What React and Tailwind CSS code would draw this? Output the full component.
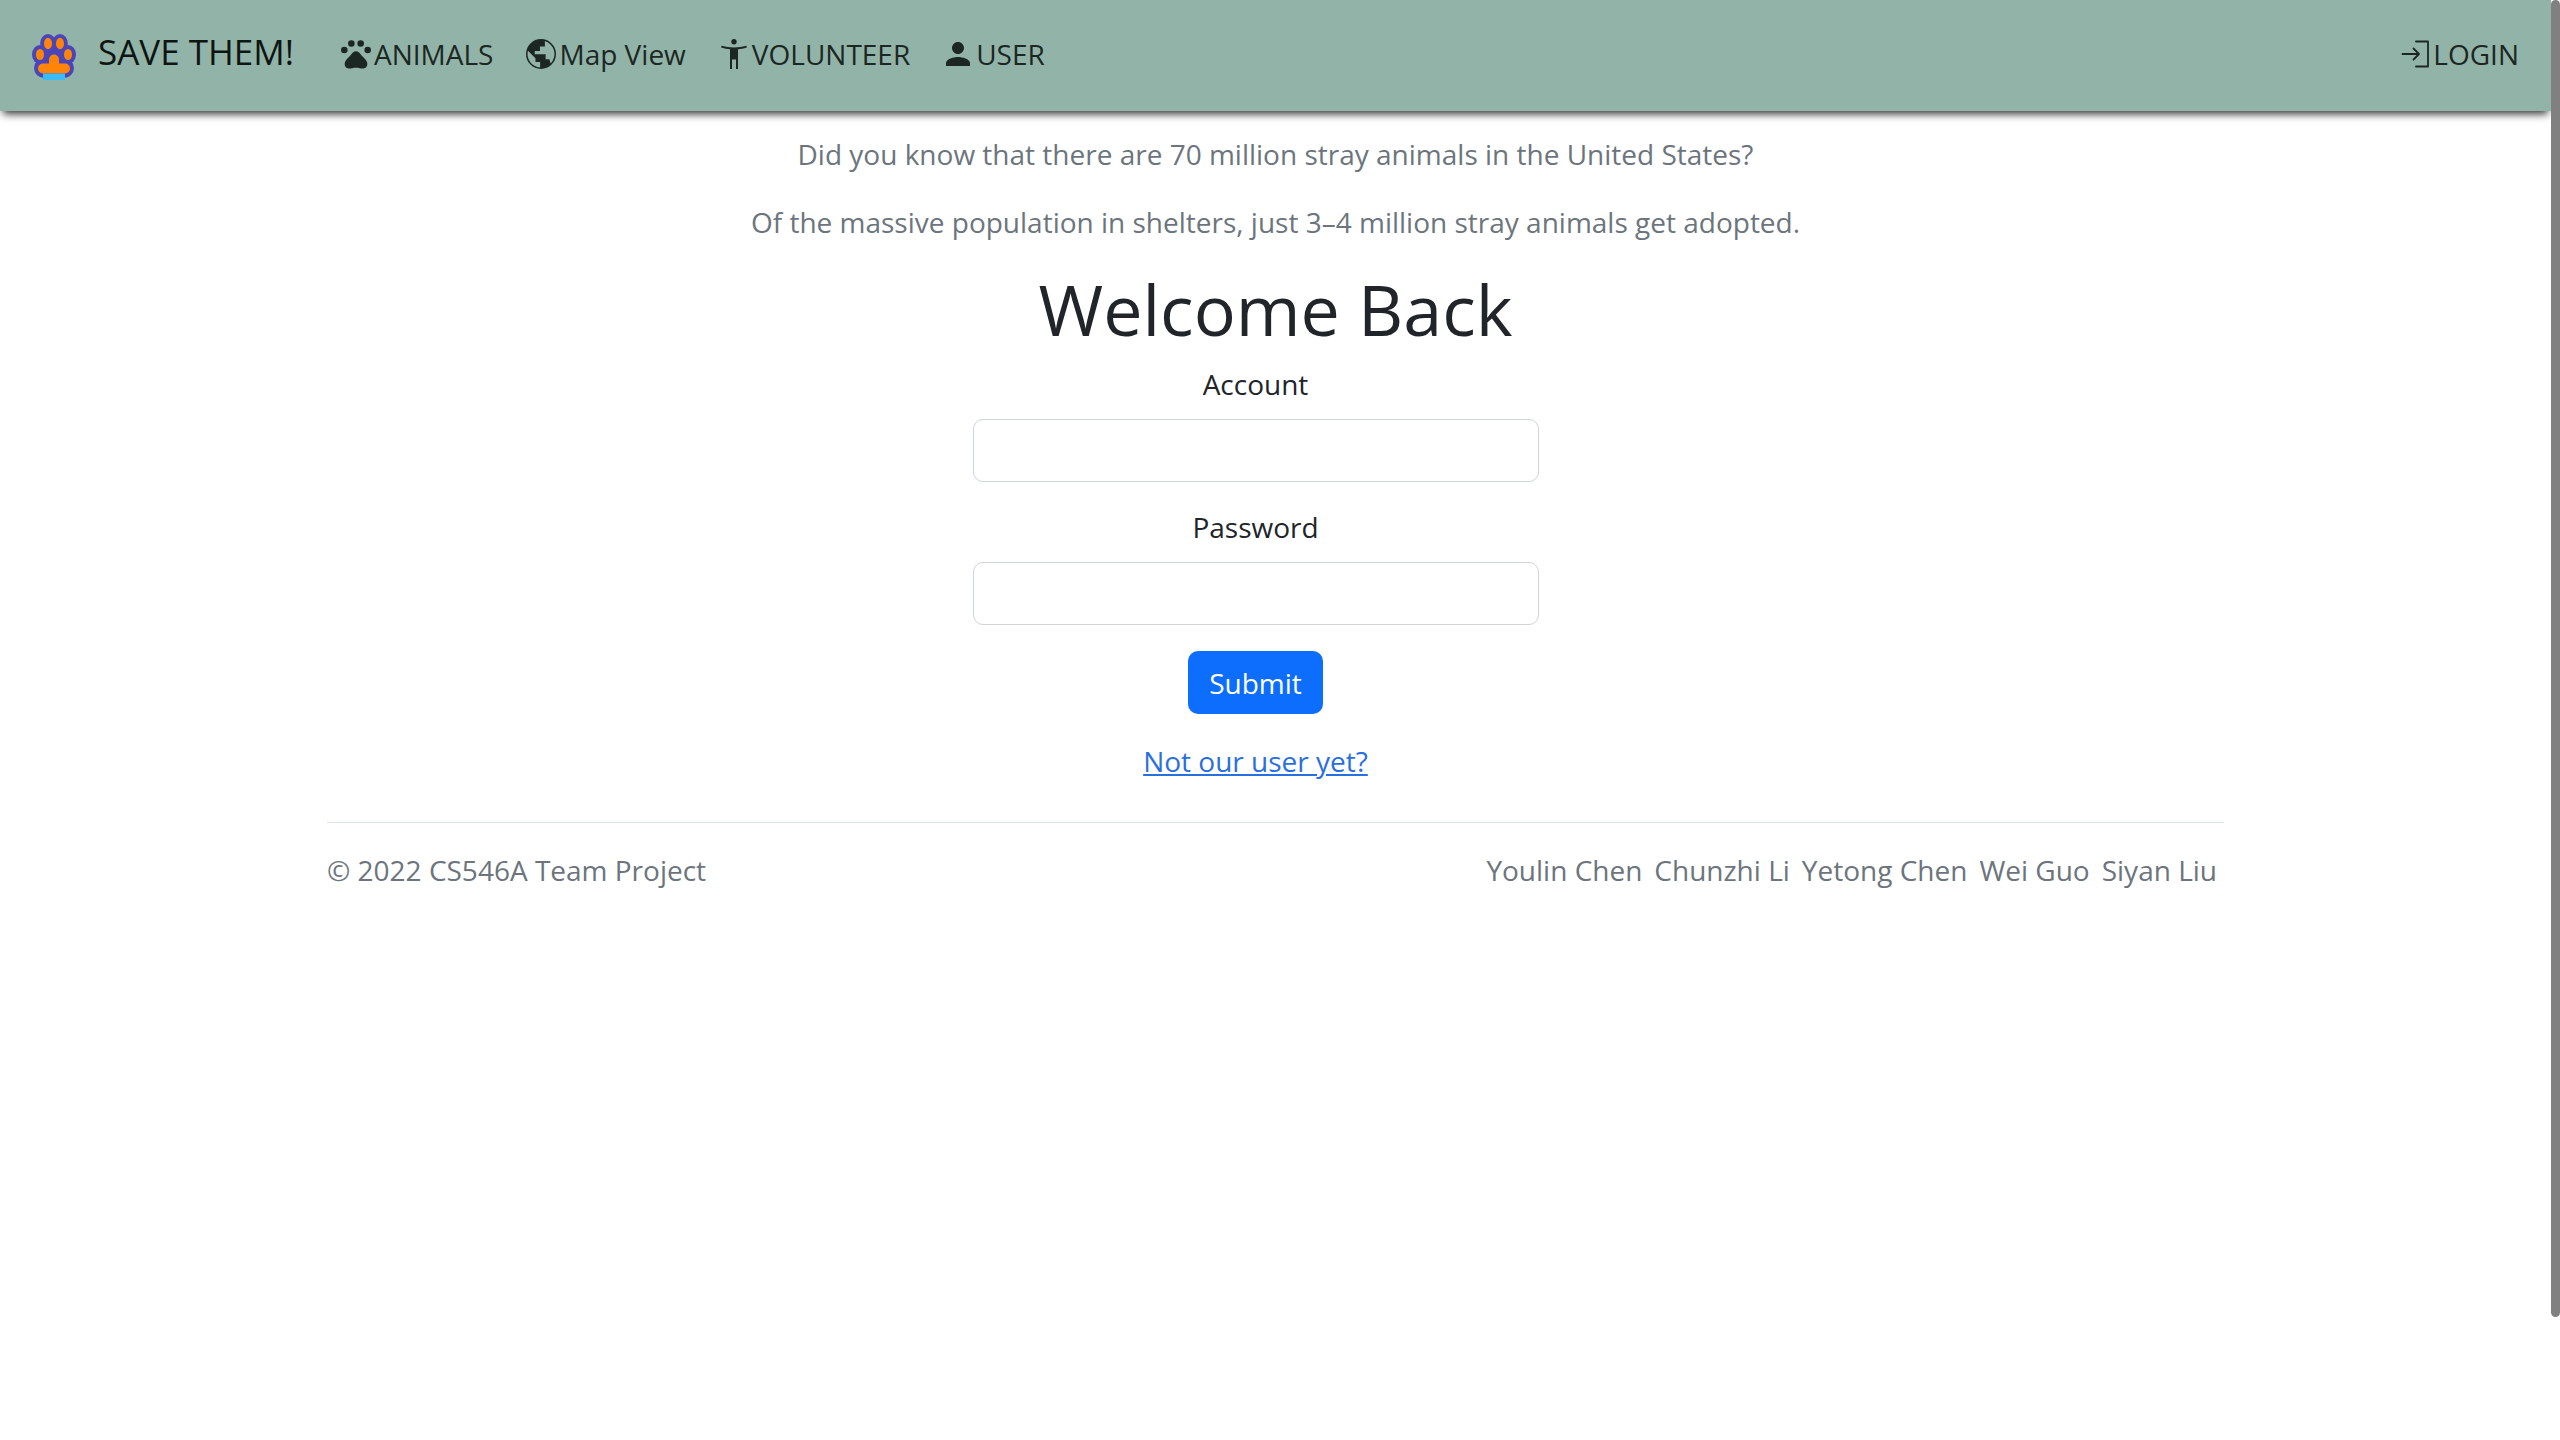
import { MdPerson } from "react-icons/md";

const authors = ["Youlin Chen", "Chunzhi Li", "Yetong Chen", "Wei Guo", "Siyan Liu"];

function PawLogo() {
  return (
    <svg viewBox="0 0 44 48" className="mt-2 h-12 w-11" aria-hidden="true">
      <g fill="#4a45b8">
        <ellipse cx="16" cy="9.500" rx="7.800" ry="9.500" />
        <ellipse cx="28" cy="9.500" rx="7.800" ry="9.500" />
        <ellipse cx="8" cy="20.500" rx="8" ry="9.500" />
        <ellipse cx="36" cy="20.500" rx="8" ry="9.500" />
        <rect x="2" y="24" width="40" height="20" rx="10" />
        <rect x="10" y="8" width="24" height="24" />
      </g>
      <g fill="#ff8408">
        <ellipse cx="16" cy="9.500" rx="4" ry="5.800" />
        <ellipse cx="28" cy="9.500" rx="4" ry="5.800" />
        <ellipse cx="8" cy="20.500" rx="4" ry="5.500" />
        <ellipse cx="36" cy="20.500" rx="4" ry="5.500" />
        <path d="M17 29.500v-4a5 5 0 0 1 10 0v4h6a5 5 0 0 1 0 10H11a5 5 0 0 1 0-10z" />
      </g>
      <rect x="11" y="39.500" width="22" height="6.500" fill="#3bbcf7" />
    </svg>
  );
}

function PawIcon() {
  return (
    <svg viewBox="0 0 24 24" className="size-9" fill="currentColor" aria-hidden="true">
      <circle cx="4.200" cy="9.300" r="2.200" />
      <circle cx="8.900" cy="5" r="2.200" />
      <circle cx="15.100" cy="5" r="2.200" />
      <circle cx="19.800" cy="9.300" r="2.200" />
      <path d="M12 10.200C13.500 10.200 14.300 11.200 15.300 12.500C16.500 14 18 15 19 16.700C20.300 19 19.200 21.700 16.800 21.700C15 21.700 14 21.200 12 21.200S9 21.700 7.200 21.700C4.800 21.700 3.700 19 5 16.700C6 15 7.500 14 8.700 12.500C9.700 11.200 10.500 10.200 12 10.200z" />
    </svg>
  );
}

function GlobeIcon() {
  return (
    <svg viewBox="0 0 24 24" className="size-9" fill="currentColor" aria-hidden="true">
      <path
        fillRule="evenodd"
        d="M12 2a10 10 0 1 1 0 20a10 10 0 1 1 0-20z M11.400 21A9 9 0 0 1 3.300 9.800L8.300 14.800V17.300H11.400z M18.400 18.300L17.600 15.500H15.100V12.200H7.800V10H11.300V7H14.600V3.400A9 9 0 0 1 18.400 18.300z"
      />
    </svg>
  );
}

function FigureIcon() {
  return (
    <svg viewBox="-5 -3 36 36" className="size-9" fill="currentColor" aria-hidden="true">
      <circle cx="13" cy="2.700" r="2.700" />
      <path d="M.5 6.800Q6.500 8.500 13 8.500T25.500 6.800L25.900 8.600Q21 10 17 10.300V30H15V20.500H11V30H9V10.300Q5 10 .1 8.600z" />
    </svg>
  );
}

function LoginIcon() {
  return (
    <svg viewBox="-4 -4 36 36" className="size-9" fill="none" stroke="currentColor" strokeWidth="1.800" strokeLinecap="round" strokeLinejoin="round" aria-hidden="true">
      <path d="M15 1.500H27v25H15M1.500 14h16M12.500 8.500l5.500 5.500-5.500 5.500" />
    </svg>
  );
}

function NavLink({ icon, children }) {
  return (
    <a href="#" className="flex items-center">
      {icon}
      {children}
    </a>
  );
}

function Field({ id, label, type }) {
  return (
    <div className="flex flex-col items-center gap-[14px]">
      <label htmlFor={id}>{label}</label>
      <input id={id} type={type} className="h-[63px] w-full rounded-[10px] border border-[#ced4da] bg-white px-5 outline-none" />
    </div>
  );
}

export default function App() {
  return (
    <div className="flex min-h-screen bg-white font-['Open_Sans',sans-serif] text-[28px] leading-[42px] text-[#212529]">
      <div className="min-w-0 flex-1">
        <header className="flex h-[111px] items-center justify-between bg-[#92b4a8] px-8 pb-1 text-[#1c2723] shadow-[0_6px_8px_-3px_rgba(0,0,0,0.8)]">
          <nav className="flex items-center gap-[30px]">
            <a href="#" className="mr-[14px] flex items-center gap-[22px] text-[35px] text-[#0f1512]">
              <PawLogo />
              <span className="pb-1">SAVE THEM!</span>
            </a>
            <NavLink icon={<PawIcon />}>ANIMALS</NavLink>
            <NavLink icon={<GlobeIcon />}>Map View</NavLink>
            <NavLink icon={<FigureIcon />}>VOLUNTEER</NavLink>
            <NavLink icon={<MdPerson className="size-9" aria-hidden="true" />}>USER</NavLink>
          </nav>
          <NavLink icon={<LoginIcon />}>LOGIN</NavLink>
        </header>

        <main className="pt-[22px] text-center">
          <div className="flex flex-col gap-[26px] text-[#6c757d]">
            <p>Did you know that there are 70 million stray animals in the United States?</p>
            <p>Of the massive population in shelters, just 3–4 million stray animals get adopted.</p>
          </div>
          <h1 className="mt-6 mb-3 text-[70px] leading-[84px]">Welcome Back</h1>
          <form className="mx-auto flex w-[606px] flex-col items-center pr-10">
            <div className="flex w-full flex-col gap-6">
              <Field id="account" label="Account" type="text" />
              <Field id="password" label="Password" type="password" />
            </div>
            <button type="button" className="mt-[26px] h-[63px] rounded-[10px] bg-[#0d6efd] px-[21px] text-white">Submit</button>
            <a href="#" className="mt-[26px] text-[#2a6fe0] underline">Not our user yet?</a>
          </form>
        </main>

        <footer className="mx-auto mt-10 flex w-[1897px] max-w-full items-center justify-between border-t border-[#dee2e6] py-[26px] text-[#6c757d]">
          <p>© 2022 CS546A Team Project</p>
          <ul className="flex gap-3 pr-[7px]">
            {authors.map((name) => (
              <li key={name}>{name}</li>
            ))}
          </ul>
        </footer>
      </div>
      <div className="w-[9px] shrink-0">
        <div className="h-[1317px] rounded-full bg-[#808080]" />
      </div>
    </div>
  );
}
